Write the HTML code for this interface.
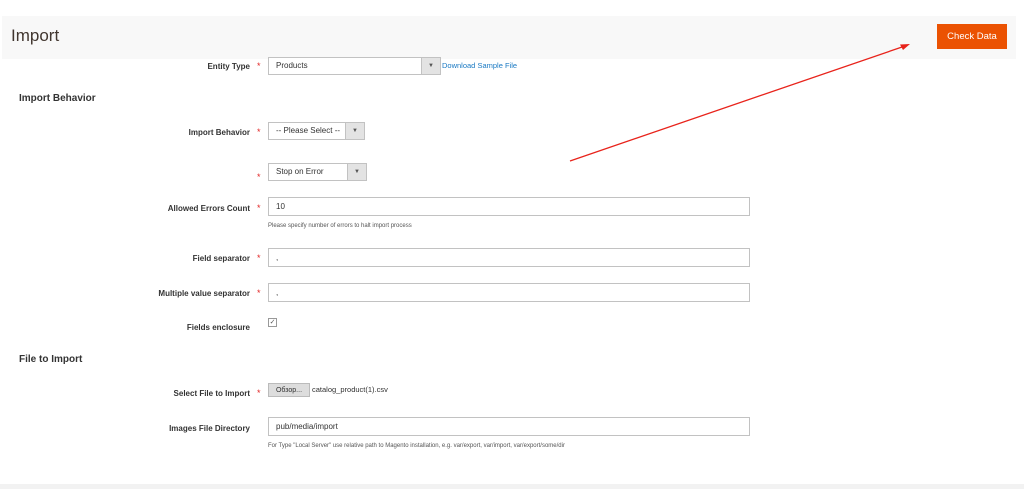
<!DOCTYPE html>
<html><head><style>
body{margin:0;width:1024px;height:489px;background:#fff;font-family:"Liberation Sans",sans-serif;position:relative;overflow:hidden;color:#303030}
.a{position:absolute}
.hdr{left:2px;top:16px;width:1014px;height:43px;background:#f8f8f8}
.lbl{font-size:8px;font-weight:bold;text-align:right;width:250px;left:0;color:#333}
.star{color:#e22626;font-size:9px;left:257px}
.inp{border:1px solid #c2c2c2;background:#fff;font-size:8px;color:#333;box-sizing:border-box;padding-left:7px;line-height:18px}
.sel{line-height:16px}
.sel .btn{position:absolute;right:0;top:0;bottom:0;width:18px;background:#e3e3e3;border-left:1px solid #c2c2c2;font-size:6px;text-align:center;line-height:16px;color:#555}
.note{font-size:6px;color:#555}
h3{margin:0;font-size:10px;font-weight:bold;color:#333}
</style></head><body>
<div class="a hdr"></div>
<div class="a" style="left:11px;top:26px;font-size:17px;color:#41362f">Import</div>
<div class="a" style="left:937px;top:24px;width:70px;height:25px;background:#eb5202;color:#fff;font-size:9.5px;text-align:center;line-height:25px">Check Data</div>

<div class="a lbl" style="top:62px">Entity Type</div><div class="a star" style="top:61px">*</div>
<div class="a inp sel" style="left:268px;top:57px;width:173px;height:18px">Products<div class="btn">▼</div></div>
<div class="a" style="left:442px;top:61px;font-size:7.5px;color:#1979c3">Download Sample File</div>

<h3 class="a" style="left:19px;top:93px">Import Behavior</h3>
<div class="a lbl" style="top:128px">Import Behavior</div><div class="a star" style="top:127px">*</div>
<div class="a inp sel" style="left:268px;top:122px;width:97px;height:18px">-- Please Select --<div class="btn">▼</div></div>
<div class="a star" style="top:172px">*</div>
<div class="a inp sel" style="left:268px;top:163px;width:99px;height:18px">Stop on Error<div class="btn">▼</div></div>

<div class="a lbl" style="top:204px">Allowed Errors Count</div><div class="a star" style="top:203px">*</div>
<div class="a inp" style="left:268px;top:197px;width:482px;height:19px">10</div>
<div class="a note" style="left:268px;top:223px">Please specify number of errors to halt import process</div>

<div class="a lbl" style="top:254px">Field separator</div><div class="a star" style="top:253px">*</div>
<div class="a inp" style="left:268px;top:248px;width:482px;height:19px">,</div>
<div class="a lbl" style="top:289px">Multiple value separator</div><div class="a star" style="top:288px">*</div>
<div class="a inp" style="left:268px;top:283px;width:482px;height:19px">,</div>
<div class="a lbl" style="top:323px">Fields enclosure</div>
<div class="a" style="left:268px;top:318px;width:7px;height:7px;border:1px solid #999;font-size:7px;line-height:7px;text-align:center;color:#555">✓</div>

<h3 class="a" style="left:19px;top:354px">File to Import</h3>
<div class="a lbl" style="top:389px">Select File to Import</div><div class="a star" style="top:388px">*</div>
<div class="a" style="left:268px;top:383px;width:40px;height:12px;background:#ddd;border:1px solid #bbb;font-size:7px;line-height:13px;text-align:center">Обзор...</div>
<div class="a" style="left:312px;top:385px;font-size:7.5px">catalog_product(1).csv</div>
<div class="a lbl" style="top:424px">Images File Directory</div>
<div class="a inp" style="left:268px;top:417px;width:482px;height:19px">pub/media/import</div>
<div class="a note" style="left:268px;top:443px">For Type "Local Server" use relative path to Magento installation, e.g. var/export, var/import, var/export/some/dir</div>

<div class="a" style="left:0;top:484px;width:1024px;height:5px;background:#f2f2f2"></div>
<svg class="a" style="left:0;top:0" width="1024" height="489"><line x1="570" y1="161" x2="905" y2="46" stroke="#e8231b" stroke-width="1.3"/><polygon points="910,44 900,44.5 903,50" fill="#e8231b"/></svg>
</body></html>
